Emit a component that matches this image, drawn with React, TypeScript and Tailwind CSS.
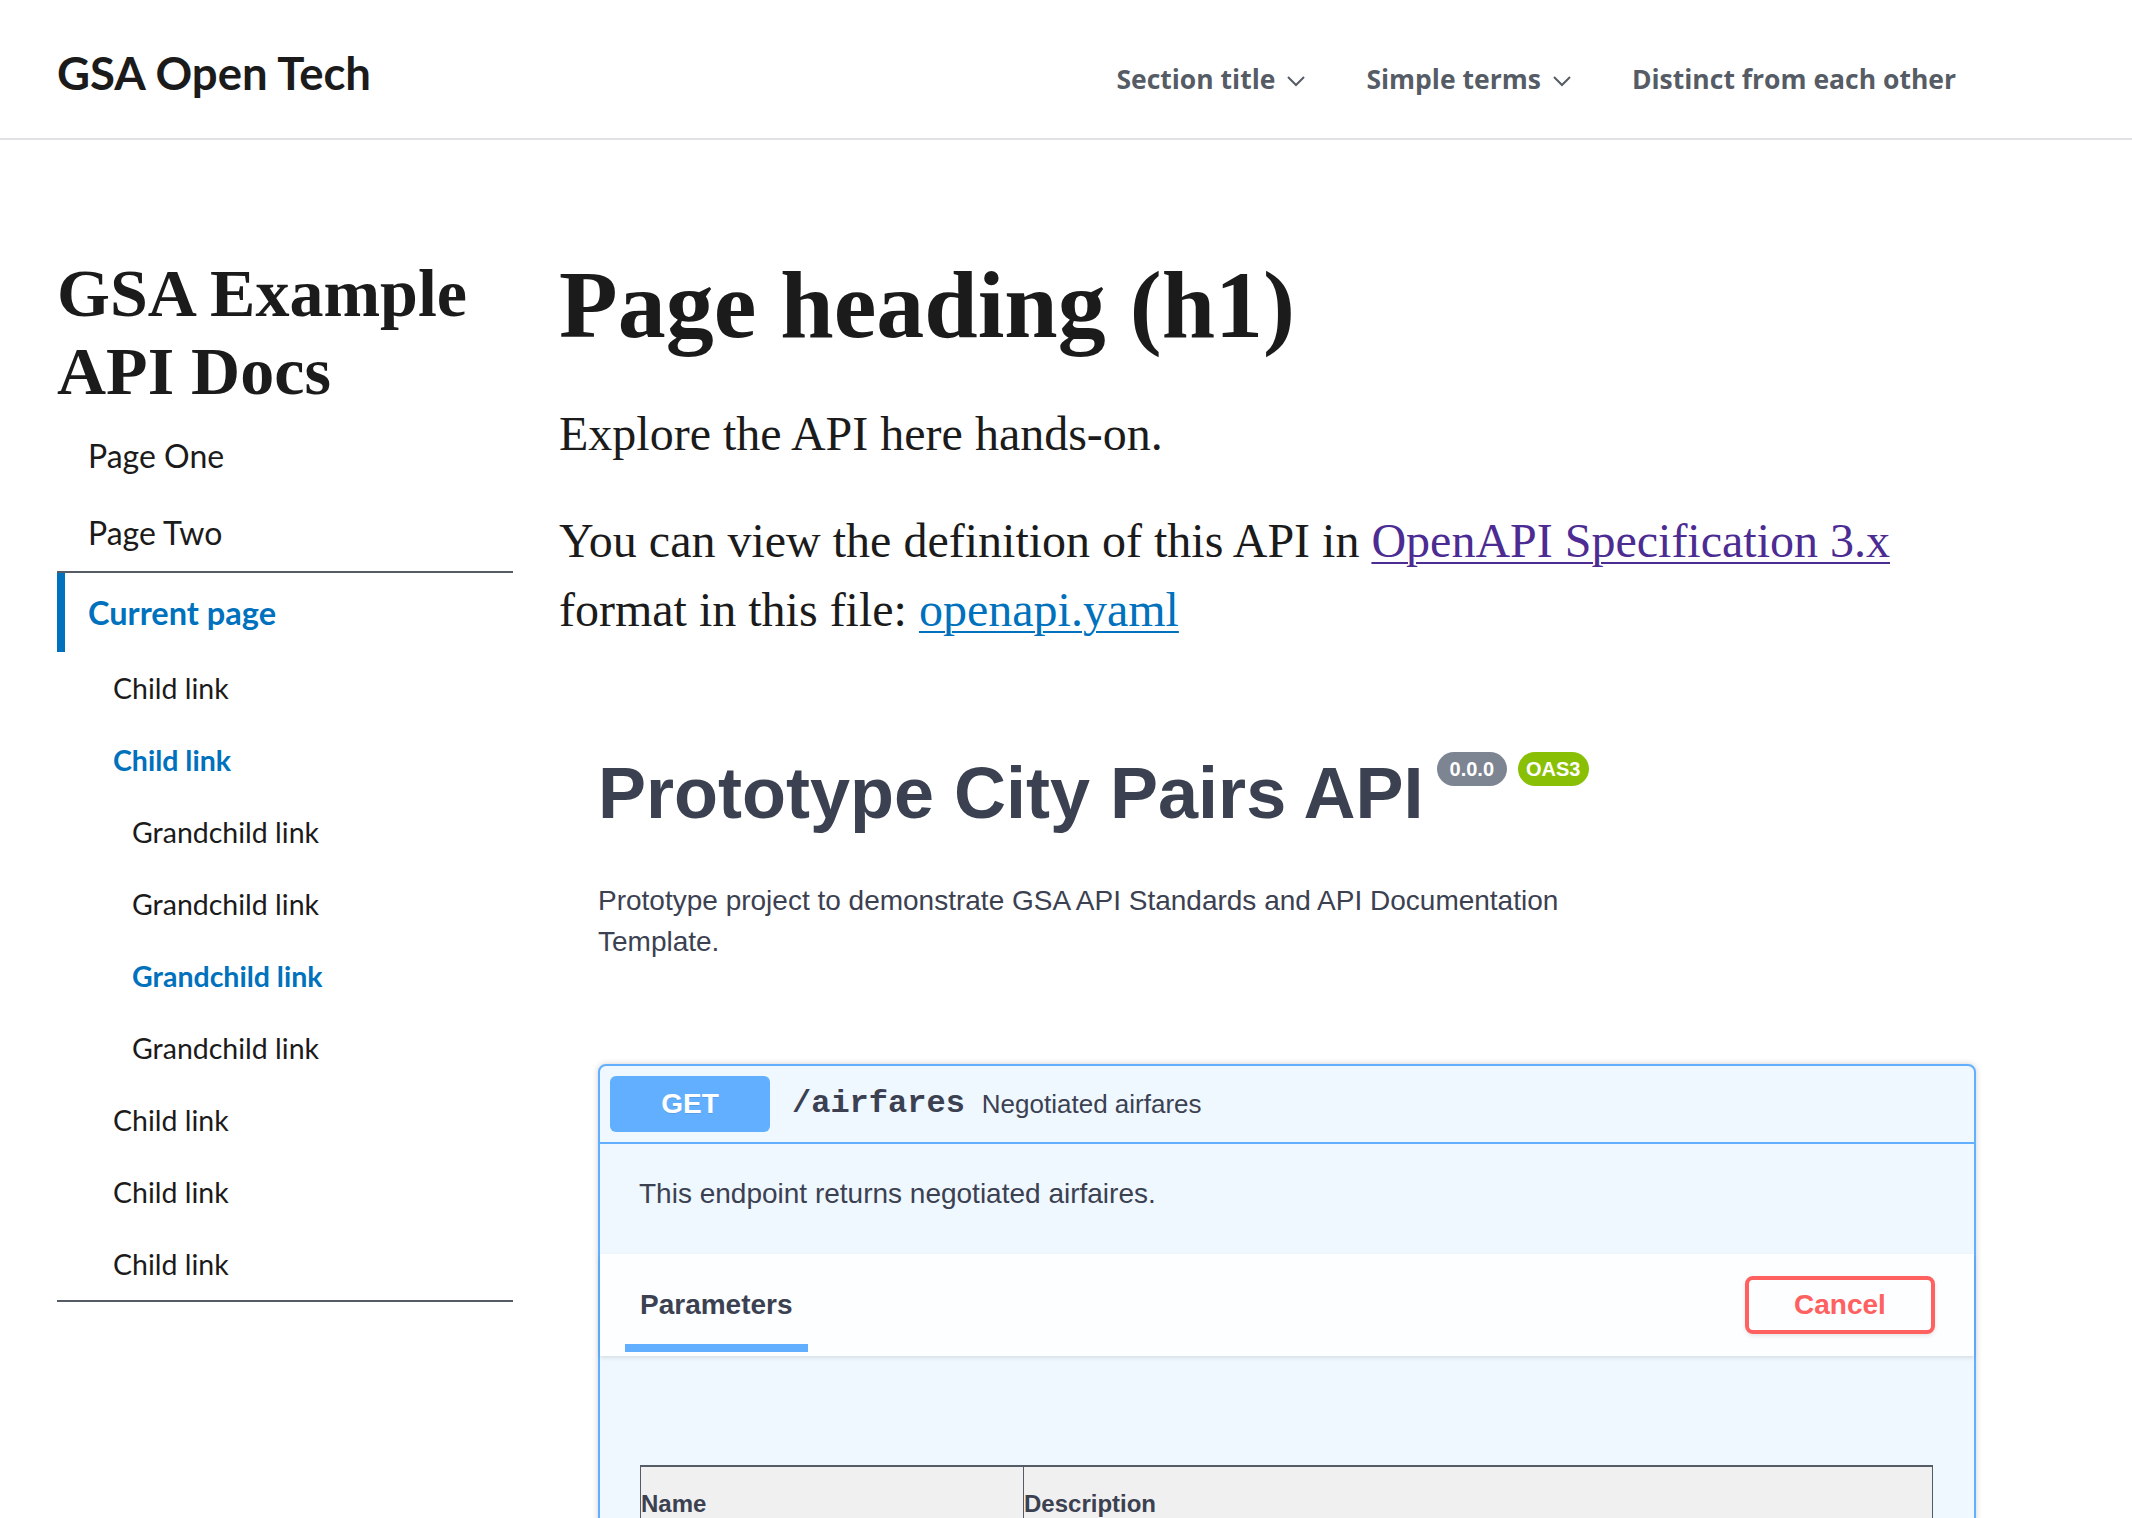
import React from "react";

function Chevron() {
  return (
    <svg width="20" height="12" viewBox="0 0 20 12" fill="none" className="mt-[4px]">
      <polyline points="2,2 10,10 18,2" stroke="#565c65" strokeWidth="2" fill="none" />
    </svg>
  );
}

function SideItem({
  label,
  level,
  active,
}: {
  label: string;
  level: 1 | 2;
  active?: boolean;
}) {
  const pad = level === 1 ? "pl-[56px]" : "pl-[75px]";
  const tone = active ? "font-bold text-[#0071bc]" : "text-[#1b1b1b]";
  return (
    <li className={`h-[72px] flex items-center ${pad} ${tone} text-[28.5px] leading-[34px]`}>{label}</li>
  );
}

export default function App() {
  return (
    <div className="w-[2132px] h-[1518px] overflow-hidden bg-white text-[#1b1b1b]">
      <header className="h-[140px] border-b-2 border-[#dfe1e2] flex items-start">
        <div className="pl-[57px] pt-[46px] font-['Lato',sans-serif] font-bold text-[45.5px] leading-[54px] text-[#1b1b1b]">
          GSA Open Tech
        </div>
        <nav className="ml-auto mr-[176px] pt-[61px] flex items-start gap-[60px] font-['Open_Sans',sans-serif] font-bold text-[26.5px] leading-[36px] text-[#565c65]">
          <div className="flex items-center gap-[11px]">
            <span>Section title</span>
            <Chevron />
          </div>
          <div className="flex items-center gap-[11px]">
            <span>Simple terms</span>
            <Chevron />
          </div>
          <div>Distinct from each other</div>
        </nav>
      </header>

      <div className="flex items-start">
        <aside className="ml-[57px] w-[456px] shrink-0 pt-[114px]">
          <h2 className="font-['Liberation_Serif',serif] font-bold text-[68px] leading-[78px] mb-[7px] text-[#1b1b1b]">
            GSA Example API Docs
          </h2>
          <ul className="font-['Lato',sans-serif] border-b-2 border-[#565c65]">
            <li className="h-[77px] flex items-center pl-[31px] text-[32px] leading-[38px]">Page One</li>
            <li className="h-[77px] flex items-center pl-[31px] text-[32px] leading-[38px] border-b-2 border-[#565c65] box-content">
              Page Two
            </li>
            <li className="h-[79px] flex items-center border-l-8 border-[#0071bc] pl-[23px] text-[32.5px] leading-[38px] font-bold text-[#0071bc]">
              Current page
            </li>
            <SideItem label="Child link" level={1} />
            <SideItem label="Child link" level={1} active />
            <SideItem label="Grandchild link" level={2} />
            <SideItem label="Grandchild link" level={2} />
            <SideItem label="Grandchild link" level={2} active />
            <SideItem label="Grandchild link" level={2} />
            <SideItem label="Child link" level={1} />
            <SideItem label="Child link" level={1} />
            <SideItem label="Child link" level={1} />
          </ul>
        </aside>

        <main className="ml-[46px] w-[1420px] shrink-0 pt-[107px]">
          <h1 className="font-['Liberation_Serif',serif] font-bold text-[96px] leading-[115px] text-[#1b1b1b]">
            Page heading (h1)
          </h1>
          <p className="mt-[37px] font-['Liberation_Serif',serif] text-[48px] leading-[69px]">
            Explore the API here hands-on.
          </p>
          <p className="mt-[38px] font-['Liberation_Serif',serif] text-[48px] leading-[69px]">
            You can view the definition of this API in{" "}
            <a href="#" className="text-[#4c2c92] underline decoration-2 underline-offset-[5px]">
              OpenAPI Specification 3.x
            </a>{" "}
            format in this file:{" "}
            <a href="#" className="text-[#0071bc] underline decoration-2 underline-offset-[5px]">
              openapi.yaml
            </a>
          </p>

          <section className="mt-[106px] pl-[39px] font-['Liberation_Sans',Arial,sans-serif] text-[#3b4151]">
            <div className="flex items-start">
              <h2 className="text-[72px] leading-[86px] font-bold text-[#3b4151]">Prototype City Pairs API</h2>
              <span className="ml-[13px] mt-[2px] h-[34px] px-[13px] rounded-full bg-[#7d8492] text-white font-bold text-[20px] leading-[34px]">
                0.0.0
              </span>
              <span className="ml-[11px] mt-[2px] h-[34px] px-[8px] rounded-full bg-[#89bf04] text-white font-bold text-[20px] leading-[34px]">
                OAS3
              </span>
            </div>
            <p className="mt-[44px] max-w-[1000px] text-[28px] leading-[41px]">
              Prototype project to demonstrate GSA API Standards and API Documentation Template.
            </p>

            <div className="mt-[102px] w-[1378px] border-2 border-[#61affe] rounded-[8px] bg-[#eff7ff] shadow-[0_0_6px_rgba(0,0,0,0.19)]">
              <div className="h-[78px] flex items-center px-[10px] border-b-2 border-[#61affe]">
                <div className="w-[160px] h-[56px] rounded-[6px] bg-[#61affe] text-white font-bold text-[28px] flex items-center justify-center [text-shadow:0_1px_0_rgba(0,0,0,0.1)]">
                  GET
                </div>
                <span className="ml-[22px] font-['Liberation_Mono',monospace] font-bold text-[32px] text-[#3b4151]">
                  /airfares
                </span>
                <span className="ml-[17px] text-[26px] text-[#3b4151]">Negotiated airfares</span>
              </div>
              <div className="pl-[39px] pt-[30px] pb-[40px]">
                <p className="text-[28px] leading-[40px]">This endpoint returns negotiated airfaires.</p>
              </div>
              <div className="h-[102px] bg-[rgba(255,255,255,0.8)] shadow-[0_2px_4px_rgba(0,0,0,0.1)] flex items-center justify-between pl-[40px] pr-[39px]">
                <div className="relative h-full flex items-center">
                  <span className="text-[28px] font-bold text-[#3b4151]">Parameters</span>
                  <div className="absolute bottom-[4px] left-[-10%] w-[120%] h-[8px] bg-[#61affe]" />
                </div>
                <button className="w-[190px] h-[58px] border-4 border-[#ff6060] rounded-[8px] text-[#ff6060] font-bold text-[28px] bg-transparent shadow-[0_2px_4px_rgba(0,0,0,0.1)]">
                  Cancel
                </button>
              </div>
              <div className="pt-[109px] pl-[40px] pr-[39px] pb-[40px]">
                <table className="w-[1293px] border-collapse">
                  <thead>
                    <tr className="bg-[#f0f0f0]">
                      <th className="w-[383px] text-left align-top pt-[23px] pb-[20px] text-[24px] leading-[28px] font-bold text-[#3b4151] border-t-2 border-l border-r border-[#565c65]">
                        Name
                      </th>
                      <th className="text-left align-top pt-[23px] pb-[20px] text-[24px] leading-[28px] font-bold text-[#3b4151] border-t-2 border-r border-[#565c65]">
                        Description
                      </th>
                    </tr>
                  </thead>
                  <tbody>
                    <tr>
                      <td className="border border-[#565c65] p-[20px] text-[24px]">&nbsp;</td>
                      <td className="border border-[#565c65] p-[20px] text-[24px]">&nbsp;</td>
                    </tr>
                  </tbody>
                </table>
              </div>
            </div>
          </section>
        </main>
      </div>
    </div>
  );
}
